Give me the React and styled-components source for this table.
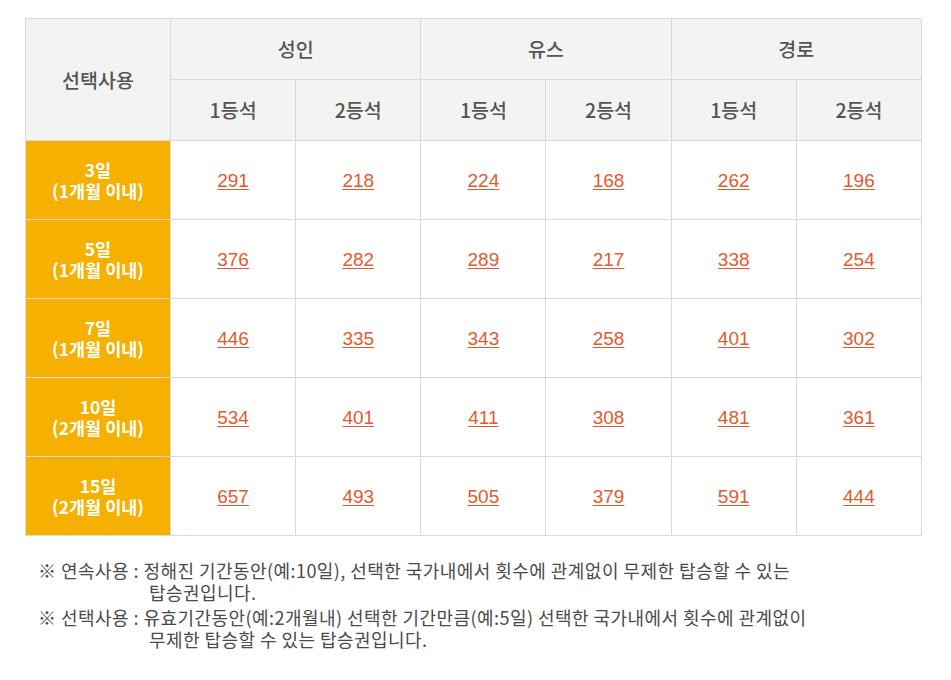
import React from 'react';
import styled, { createGlobalStyle } from 'styled-components';

const GlobalStyle = createGlobalStyle`
  body {
    margin: 0;
    background: #fff;
    font-family: "Noto Sans CJK KR", "Noto Sans", sans-serif;
  }
`;

const Page = styled.div`
  padding: 18px 29px 0 25px;
`;

const Table = styled.table`
  width: 897px;
  border-collapse: collapse;
  table-layout: fixed;
`;

const TH = styled.th`
  height: 60px;
  padding: 0;
  background: #f3f3f3;
  border: 1px solid #d9d9d9;
  color: #555;
  font-size: 19.5px;
  font-weight: 500;
  line-height: 1.2;
`;

const DayCell = styled.th`
  height: 78px;
  padding: 0;
  background: #f5b000;
  border: 1px solid #d9d9d9;
  color: #fff;
  font-size: 17.5px;
  font-weight: 700;
  line-height: 21px;
`;

const TD = styled.td`
  padding: 0;
  border: 1px solid #d9d9d9;
  text-align: center;
`;

const Price = styled.a`
  color: #e35a2e;
  font-family: "Liberation Sans", "Noto Sans CJK KR", sans-serif;
  font-size: 19px;
  text-decoration: underline;
  text-underline-offset: 2px;
  cursor: pointer;
`;

const Notes = styled.ul`
  list-style: none;
  margin: 23px 0 0;
  padding: 0 0 0 13px;
  width: 785px;
`;

const Note = styled.li`
  color: #4a4a4a;
  font-size: 18px;
  letter-spacing: 0.45px;
  line-height: 22px;
  word-break: keep-all;
  padding-left: 111px;
  text-indent: -111px;
  margin-bottom: 3px;
`;

const rows = [
  { day: '3일', limit: '1개월 이내', prices: [291, 218, 224, 168, 262, 196] },
  { day: '5일', limit: '1개월 이내', prices: [376, 282, 289, 217, 338, 254] },
  { day: '7일', limit: '1개월 이내', prices: [446, 335, 343, 258, 401, 302] },
  { day: '10일', limit: '2개월 이내', prices: [534, 401, 411, 308, 481, 361] },
  { day: '15일', limit: '2개월 이내', prices: [657, 493, 505, 379, 591, 444] },
];

const groups = ['성인', '유스', '경로'];

export default function App() {
  return (
    <>
      <GlobalStyle />
      <Page>
        <Table>
          <colgroup>
            <col style={{ width: 145 }} />
            {[0, 1, 2, 3, 4, 5].map(i => <col key={i} />)}
          </colgroup>
          <thead>
            <tr>
              <TH rowSpan={2}>선택사용</TH>
              {groups.map(g => <TH key={g} colSpan={2}>{g}</TH>)}
            </tr>
            <tr>
              {groups.map(g => (
                <React.Fragment key={g}>
                  <TH>1등석</TH>
                  <TH>2등석</TH>
                </React.Fragment>
              ))}
            </tr>
          </thead>
          <tbody>
            {rows.map(row => (
              <tr key={row.day}>
                <DayCell>{row.day}<br />({row.limit})</DayCell>
                {row.prices.map((p, i) => (
                  <TD key={i}><Price>{p}</Price></TD>
                ))}
              </tr>
            ))}
          </tbody>
        </Table>
        <Notes>
          <Note>※ 연속사용 : 정해진 기간동안(예:10일), 선택한 국가내에서 횟수에 관계없이 무제한 탑승할 수 있는 탑승권입니다.</Note>
          <Note>※ 선택사용 : 유효기간동안(예:2개월내) 선택한 기간만큼(예:5일) 선택한 국가내에서 횟수에 관계없이 무제한 탑승할 수 있는 탑승권입니다.</Note>
        </Notes>
      </Page>
    </>
  );
}
